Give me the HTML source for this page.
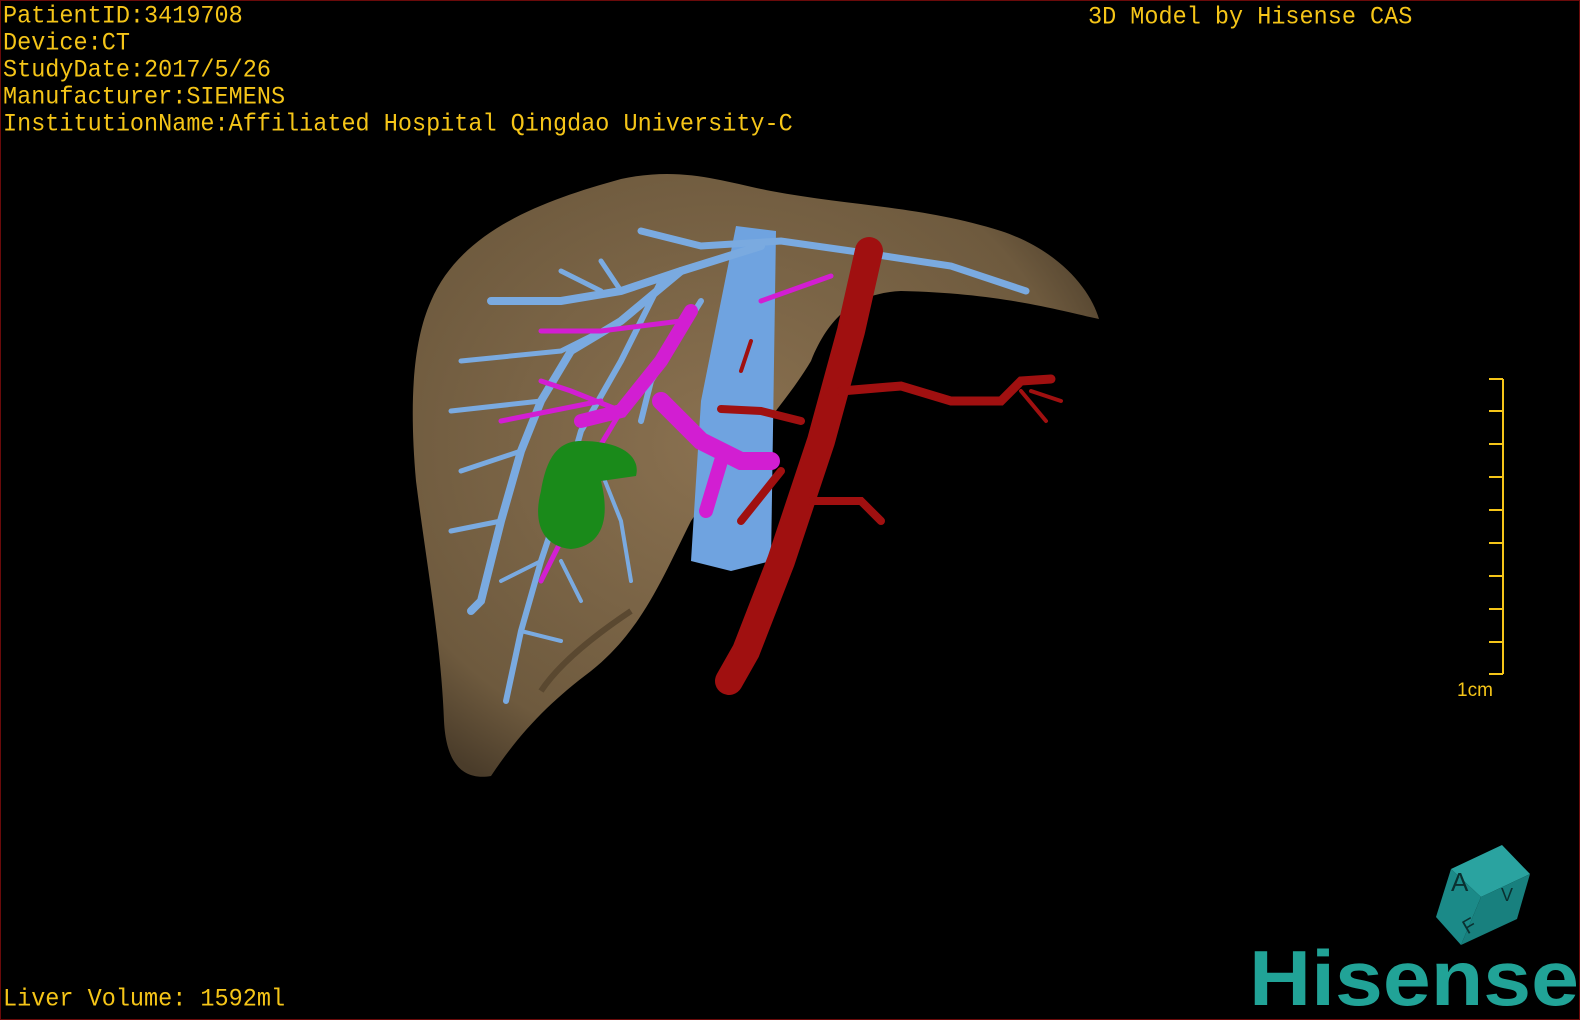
<!DOCTYPE html>
<html><head><meta charset="utf-8"><style>
html,body{margin:0;padding:0;background:#000;}
#w{position:relative;width:1578px;height:1018px;border:1px solid #6a0a0a;background:#000;overflow:hidden;}
.t{position:absolute;left:2px;color:#f5c518;font-family:"Liberation Mono",monospace;font-size:23.5px;line-height:25px;white-space:pre;transform:scaleY(1.08);transform-origin:top left;}
</style></head><body><div id="w">
<svg width="1578" height="1018" style="position:absolute;left:0;top:0">
<defs><radialGradient id="lg" cx="0.45" cy="0.45" r="0.65"><stop offset="0" stop-color="#8a7150"/><stop offset="0.8" stop-color="#6e5a3e"/><stop offset="1" stop-color="#4a3c2a"/></radialGradient></defs>
<path d="M430,300 C460,230 540,200 620,178 C680,165 720,180 770,190 C850,205 920,205 1000,230 C1060,250 1090,290 1098,318 C1060,310 1000,292 900,290 C860,292 830,310 810,360 C780,410 730,460 690,520 C660,580 640,630 590,670 C550,700 520,730 490,775 C460,780 445,760 443,720 C440,640 425,560 415,480 C408,400 412,340 430,300 Z" fill="url(#lg)"/>
<path d="M540,690 C560,660 600,630 630,610" stroke="#5a4830" stroke-width="6" fill="none"/>
<path d="M735,225 L775,230 L770,560 L730,570 L690,560 L700,400 Z" fill="#6fa3e0"/>
<g stroke="#7aaae0" fill="none" stroke-linecap="round">
<path d="M640,230 L700,245 L780,240 L850,250 L950,265 L1025,290" stroke-width="7"/>
<path d="M760,245 L680,270 L620,290 L560,300 L490,300" stroke-width="8"/>
<path d="M680,270 L620,320 L570,350 L540,400 L520,450 L500,520 L480,600 L470,610" stroke-width="8"/>
<path d="M600,290 L560,270 M620,290 L600,260 M560,350 L460,360 M540,400 L450,410 M520,450 L460,470 M500,520 L450,530 M560,350 L600,330"  stroke-width="5"/>
<path d="M660,280 L620,360 L580,430 L560,500 L540,560 L520,630 L505,700" stroke-width="6"/>
<path d="M600,470 L620,520 L630,580 M560,560 L580,600 M520,630 L560,640 M540,560 L500,580" stroke-width="4"/>
<path d="M700,300 L650,380 L640,420" stroke-width="6"/>
</g>
<g stroke="#d21ed2" fill="none" stroke-linecap="round">
<path d="M690,310 L660,360 L620,410 L580,420" stroke-width="14"/>
<path d="M660,400 L700,440 L740,460 L770,460" stroke-width="18"/>
<path d="M720,460 L705,510" stroke-width="14"/>
<path d="M620,410 L570,390 L540,380 M620,410 L590,460 L560,540 L540,580 M600,400 L500,420 M680,320 L600,330 L540,330 M760,300 L830,275" stroke-width="5"/>
</g>
<path d="M580,440 C620,440 640,455 635,475 L600,480 C610,520 600,545 570,548 C540,545 532,520 540,490 C545,460 555,440 580,440 Z" fill="#1a8a1a"/>
<g stroke="#a01010" fill="none" stroke-linecap="round">
<path d="M868,250 L850,330 L820,440 L780,560 L745,650 L728,680" stroke-width="28"/>
<path d="M840,390 L900,385 L950,400 L1000,400 L1020,380 L1050,378" stroke-width="9"/>
<path d="M800,420 L760,410 L720,408 M810,500 L860,500 L880,520 M780,470 L740,520" stroke-width="8"/>
<path d="M750,340 L740,370 M1020,390 L1045,420 M1030,390 L1060,400" stroke-width="4"/>
</g>
<g stroke="#f5c518" stroke-width="2" fill="none">
<path d="M1502,378 L1502,673"/>
<path d="M1488,378 H1502 M1488,410 H1502 M1488,443 H1502 M1488,476 H1502 M1488,509 H1502 M1488,542 H1502 M1488,575 H1502 M1488,608 H1502 M1488,641 H1502 M1488,673 H1502"/>
</g>
<text x="1456" y="695" fill="#f5c518" font-family="Liberation Sans,sans-serif" font-size="19">1cm</text>
<polygon points="1450,868 1501,844 1529,873 1480,896" fill="#2aa3a0"/>
<polygon points="1450,868 1480,896 1460,944 1435,916" fill="#1b8a88"/>
<polygon points="1480,896 1529,873 1516,918 1460,944" fill="#18807e"/>
<text x="1450" y="890" font-family="Liberation Sans,sans-serif" font-size="26" fill="#0a3030">A</text>
<text x="1460" y="930" font-family="Liberation Sans,sans-serif" font-size="20" fill="#0a3030" transform="rotate(-30 1470 920)">F</text>
<text x="1500" y="900" font-family="Liberation Sans,sans-serif" font-size="18" fill="#0a3030">V</text>
<text x="1248" y="1004" font-family="Liberation Sans,sans-serif" font-weight="bold" font-size="78" fill="#21a397" textLength="330" lengthAdjust="spacingAndGlyphs">Hisense</text>
</svg>
<div class="t" style="top:2px">PatientID:3419708
Device:CT
StudyDate:2017/5/26
Manufacturer:SIEMENS
InstitutionName:Affiliated Hospital Qingdao University-C</div>
<div class="t" style="top:3px;left:1087px">3D Model by Hisense CAS</div>
<div class="t" style="top:985px">Liver Volume: 1592ml</div>
</div></body></html>
